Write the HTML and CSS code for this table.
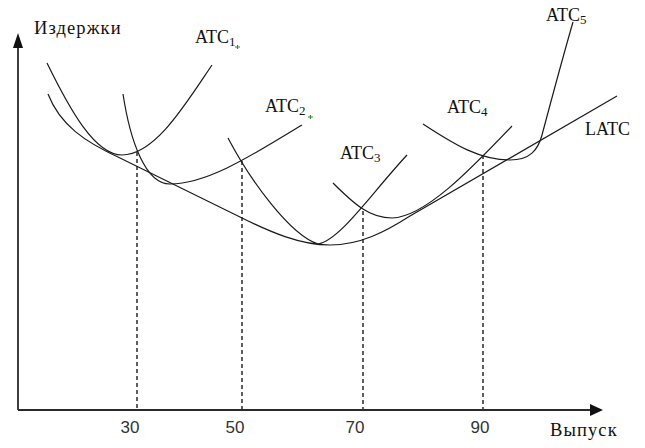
FILE: index.html
```html
<!DOCTYPE html>
<html lang="ru">
<head>
<meta charset="utf-8">
<title>LATC</title>
<link rel="stylesheet" href="styles.css">
</head>
<body>
<div class="figure">
<svg class="chart" width="645" height="448" viewBox="0 0 645 448" xmlns="http://www.w3.org/2000/svg">
  <!-- axes -->
  <line class="axis" x1="18" y1="410" x2="18" y2="46"/>
  <polygon class="arrow" points="18,33 13,48 23,48"/>
  <line class="axis" x1="18" y1="410" x2="592" y2="410"/>
  <polygon class="arrow" points="603,410 590,404 590,416"/>

  <!-- dashed drop lines -->
  <line class="dash" x1="137" y1="152" x2="137" y2="409"/>
  <line class="dash" x1="242" y1="161" x2="242" y2="409"/>
  <line class="dash" x1="363" y1="211" x2="363" y2="409"/>
  <line class="dash" x1="483" y1="155" x2="483" y2="409"/>

  <!-- curves -->
  <path class="curve" d="M47,63 C70,110 95,155 122,155 C155,155 185,105 212,65"/>
  <path class="curve" d="M123,94 C130,140 145,184 170,184 C210,184 260,150 302,125"/>
  <path class="curve" d="M228,138 C250,180 290,235 318,244 C340,240 370,195 407,155"/>
  <path class="curve" d="M333,183 C355,205 370,218 392,218 C425,217 470,170 512,126"/>
  <path class="curve" d="M423,124 C455,145 480,160 510,160 C530,160 538,150 542,135 C546,120 562,60 573,22"/>
  <path class="curve" d="M48,94 C60,125 85,142 120,158 L240,217 C270,232 300,245 330,245 C360,245 385,232 410,216 L617,96"/>

  <!-- labels -->
  <text class="label wide" x="34" y="34">Издержки</text>
  <text class="label" x="195" y="43">ATC<tspan class="sub" dy="3">1</tspan></text>
  <text class="label" x="265" y="112">ATC<tspan class="sub" dy="3">2</tspan></text>
  <text class="label" x="340" y="159">ATC<tspan class="sub" dy="3">3</tspan></text>
  <text class="label" x="447" y="113">ATC<tspan class="sub" dy="3">4</tspan></text>
  <text class="label" x="546" y="21">ATC<tspan class="sub" dy="3">5</tspan></text>
  <text class="label" x="585" y="135">LATC</text>
  <text class="label wide" x="550" y="436">Выпуск</text>

  <path class="mark" d="M235,47 L240,47 M237.5,45 L237.5,49"/>
  <path class="mark" d="M308,117 L313,117 M310.5,115 L310.5,119"/>

  <text class="tick" x="130" y="433">30</text>
  <text class="tick" x="235" y="433">50</text>
  <text class="tick" x="355" y="433">70</text>
  <text class="tick" x="480" y="433">90</text>
</svg>
</div>
</body>
</html>
```
FILE: styles.css
```css
html, body {
  margin: 0;
  padding: 0;
  background: #ffffff;
}

.figure {
  width: 645px;
  height: 448px;
  overflow: hidden;
}

.chart {
  display: block;
}

.axis {
  stroke: #2a2a2a;
  stroke-width: 1.8;
}

.arrow {
  fill: #111111;
}

.dash {
  stroke: #2a2a2a;
  stroke-width: 1.5;
  stroke-dasharray: 4 3;
}

.curve {
  fill: none;
  stroke: #1a1a1a;
  stroke-width: 1.2;
}

.label {
  font-family: "Liberation Serif", "Times New Roman", serif;
  font-size: 18px;
  fill: #111111;
}

.wide {
  font-size: 18.5px;
  letter-spacing: 1.1px;
}

.sub {
  font-size: 13px;
}

.tick {
  font-family: "Liberation Sans", Arial, sans-serif;
  font-size: 17px;
  fill: #333333;
  text-anchor: middle;
}

.mark {
  stroke: #3a8a3a;
  stroke-width: 1.2;
  fill: none;
}
```
